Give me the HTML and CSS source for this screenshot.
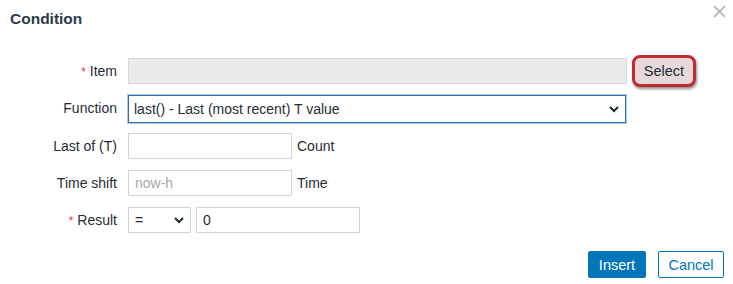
FILE: index.html
```html
<!DOCTYPE html>
<html lang="en">
<head>
  <meta charset="UTF-8" />
  <title>Condition</title>
  <link rel="stylesheet" href="styles.css">
</head>
<body>

  <div class="dialog">
    <div class="dialog-header">
      <h4>Condition</h4>
      <button class="close-btn" title="Close">
        <svg width="13" height="13" viewBox="0 0 13 13">
          <path d="M1 1 L12 12 M12 1 L1 12" stroke="#a9adb2" stroke-width="1.6" fill="none"/>
        </svg>
      </button>
    </div>

    <div class="form-grid">
      <label class="field-label"><span class="req">*</span> Item</label>
      <div class="field">
        <input class="input item-input" type="text" readonly>
        <button class="select-btn">Select</button>
      </div>

      <label class="field-label">Function</label>
      <div class="field field-tall">
        <div class="select select-wide focused">
          <span>last() - Last (most recent) T value</span>
          <svg width="12" height="8" viewBox="0 0 12 8">
            <path d="M2 2 L6 6 L10 2" stroke="#1f2c33" stroke-width="2" fill="none"/>
          </svg>
        </div>
      </div>

      <label class="field-label">Last of (T)</label>
      <div class="field">
        <input class="input input-short" type="text">
        <span class="unit">Count</span>
      </div>

      <label class="field-label">Time shift</label>
      <div class="field">
        <input class="input input-short" type="text" placeholder="now-h">
        <span class="unit">Time</span>
      </div>

      <label class="field-label"><span class="req">*</span> Result</label>
      <div class="field">
        <div class="select select-small">
          <span>=</span>
          <svg width="12" height="8" viewBox="0 0 12 8">
            <path d="M2 2 L6 6 L10 2" stroke="#1f2c33" stroke-width="2" fill="none"/>
          </svg>
        </div>
        <input class="input input-short" type="text" value="0">
      </div>
    </div>

    <div class="dialog-footer">
      <button class="btn btn-primary">Insert</button>
      <button class="btn btn-alt">Cancel</button>
    </div>
  </div>

</body>
</html>
```

FILE: styles.css
```css
html, body {
  margin: 0;
  padding: 0;
  background-color: #fff;
  font-family: 'Liberation Sans', Arial, sans-serif;
  color: #1f2c33;
}

.dialog {
  width: 733px;
  height: 284px;
  box-sizing: border-box;
  position: relative;
}

.dialog-header {
  height: 58px;
  padding: 10px 10px 0;
  box-sizing: border-box;
}

.dialog-header h4 {
  margin: 0;
  font-size: 15.5px;
  line-height: 18px;
  font-weight: bold;
  color: #2a3b4b;
}

.close-btn {
  position: absolute;
  top: 4px;
  right: 5px;
  width: 17px;
  height: 17px;
  padding: 0;
  border: none;
  background: none;
}

.form-grid {
  display: grid;
  grid-template-columns: 117px 1fr;
  column-gap: 11px;
  row-gap: 11px;
}

.field-label {
  font-size: 14px;
  height: 26px;
  line-height: 26px;
  text-align: right;
}

.req {
  color: #e33734;
  font-size: 12px;
}

.field {
  display: flex;
  align-items: center;
  gap: 5px;
  height: 26px;
}

.field-tall {
  height: 27px;
}

.input {
  height: 26px;
  box-sizing: border-box;
  border: 1px solid #cfd4d8;
  background-color: #fff;
  font-family: 'Liberation Sans', Arial, sans-serif;
  font-size: 14px;
  color: #1f2c33;
  padding: 0 6px;
  outline: none;
}

.input::placeholder {
  color: #a3a7ab;
}

.item-input {
  width: 499px;
  background-color: #ebebeb;
  border-color: #d6d9dc;
}

.input-short {
  width: 164px;
}

.unit {
  font-size: 14px;
}

.select-btn {
  width: 64px;
  height: 32px;
  margin-left: 0;
  border: 3px solid #c02a35;
  border-radius: 8px;
  background-color: #e6d8db;
  box-shadow: 1px 2px 3px rgba(0, 0, 0, 0.45);
  font-family: 'Liberation Sans', Arial, sans-serif;
  font-size: 14.5px;
  color: #1f2c33;
  padding: 0;
}

.select {
  height: 26px;
  box-sizing: border-box;
  border: 1px solid #cfd4d8;
  display: flex;
  align-items: center;
  justify-content: space-between;
  padding: 0 5px 0 5px;
  font-size: 14px;
}

.select-wide {
  width: 498px;
  height: 28px;
}

.select-wide svg {
  margin-right: 0;
}

.focused {
  border: 1px solid #2f72b3;
  box-shadow: 0 0 0 1px rgba(80, 140, 200, 0.45);
}

.select-small {
  width: 63px;
  padding-left: 6px;
}

.dialog-footer {
  display: flex;
  justify-content: flex-end;
  gap: 12px;
  padding: 18px 9px 0 0;
}

.btn {
  height: 27px;
  box-sizing: border-box;
  border-radius: 2px;
  font-family: 'Liberation Sans', Arial, sans-serif;
  font-size: 14.5px;
  padding: 0;
}

.btn-primary {
  width: 58px;
  background-color: #0275b8;
  border: 1px solid #0275b8;
  color: #fff;
}

.btn-alt {
  width: 66px;
  background-color: #fff;
  border: 1px solid #0275b8;
  color: #0275b8;
}
```
